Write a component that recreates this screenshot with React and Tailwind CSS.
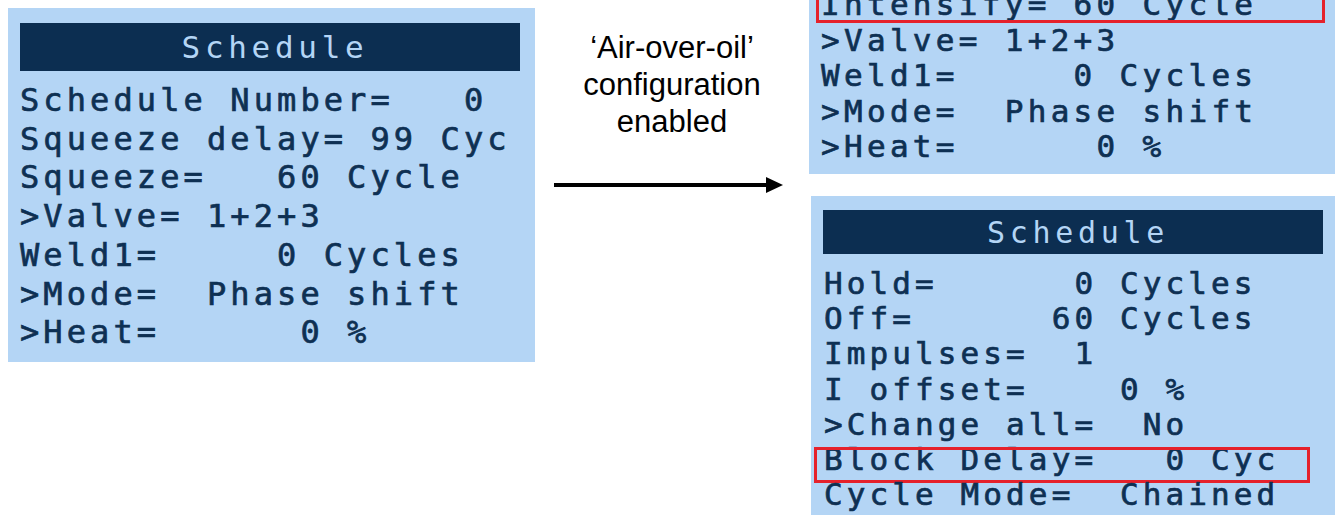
import React from "react";

const mono = "font-['DejaVu_Sans_Mono',monospace] [-webkit-text-stroke:0.7px_#0e3053]";

function Row({ text, cls, boxed, boxCls }) {
  return (
    <div className={`relative whitespace-pre ${cls}`}>
      {text}
      {boxed && (
        <span className={`absolute border-[3px] border-[#e5212b] ${boxCls}`} />
      )}
    </div>
  );
}

export default function App() {
  const left = [
    "Schedule Number=   0",
    "Squeeze delay= 99 Cyc",
    "Squeeze=   60 Cycle",
    ">Valve= 1+2+3",
    "Weld1=     0 Cycles",
    ">Mode=  Phase shift",
    ">Heat=      0 %",
  ];
  const topRight = [
    "Intensify= 60 Cycle",
    ">Valve= 1+2+3",
    "Weld1=     0 Cycles",
    ">Mode=  Phase shift",
    ">Heat=      0 %",
  ];
  const bottomRight = [
    "Hold=      0 Cycles",
    "Off=      60 Cycles",
    "Impulses=  1",
    "I offset=    0 %",
    ">Change all=  No",
    "Block Delay=   0 Cyc",
    "Cycle Mode=  Chained",
  ];

  return (
    <div className="w-[1335px] h-[515px] bg-white flex overflow-hidden">
      {/* Left panel */}
      <div className="mt-[8px] ml-[8px] w-[527px] h-[354px] shrink-0 bg-[#b4d5f5] pl-[12px] pt-[15px]">
        <div className="w-[500px] h-[48px] bg-[#0c2e51] flex items-center justify-center text-[#b4d5f5] text-[31px] tracking-[4.7px] font-['DejaVu_Sans_Mono',monospace]">
          <span className="pl-[10px]">Schedule</span>
        </div>
        <div className={`mt-[10px] text-[#0e3053] text-[32px] tracking-[4.1px] ${mono}`}>
          {left.map((t, i) => (
            <Row key={i} text={t} cls="leading-[38.7px]" />
          ))}
        </div>
      </div>

      {/* Middle: caption + arrow */}
      <div className="w-[274px] shrink-0 flex flex-col items-center">
        <div className="pt-[29px] text-center text-black text-[31px] leading-[37px] font-['Liberation_Sans',Arial,sans-serif]">
          <div>‘Air-over-oil’</div>
          <div>configuration</div>
          <div>enabled</div>
        </div>
        <div className="mt-[35px] ml-[-6px] w-[230px] h-[20px]">
          <svg width="230" height="20" viewBox="0 0 230 20">
            <line x1="0" y1="10" x2="215" y2="10" stroke="#000" strokeWidth="4" />
            <polygon points="212,2 229,10 212,18" fill="#000" />
          </svg>
        </div>
      </div>

      {/* Right column */}
      <div className="w-[526px] shrink-0 flex flex-col">
        <div className="h-[174px] w-[526px] bg-[#b4d5f5] overflow-hidden pl-[12px]">
          <div className={`mt-[-13px] text-[#0e3053] text-[31px] tracking-[4.3px] ${mono}`}>
            {topRight.map((t, i) => (
              <Row
                key={i}
                text={t}
                cls="leading-[35.5px]"
                boxed={i === 0}
                boxCls="top-0 h-full left-[-5px] w-[509px]"
              />
            ))}
          </div>
        </div>
        <div className="mt-[22px] ml-[2px] w-[524px] h-[319px] bg-[#b4d5f5] pl-[12px] pt-[14px]">
          <div className="w-[500px] h-[44px] bg-[#0c2e51] flex items-center justify-center text-[#b4d5f5] text-[30px] tracking-[4.7px] font-['DejaVu_Sans_Mono',monospace]">
            <span className="pl-[10px]">Schedule</span>
          </div>
          <div className={`mt-[12px] pl-[1px] text-[#0e3053] text-[31px] tracking-[4.1px] ${mono}`}>
            {bottomRight.map((t, i) => (
              <Row
                key={i}
                text={t}
                cls="leading-[35.2px]"
                boxed={i === 5}
                boxCls="top-[5px] h-[36px] left-[-10px] w-[496px]"
              />
            ))}
          </div>
        </div>
      </div>
    </div>
  );
}
